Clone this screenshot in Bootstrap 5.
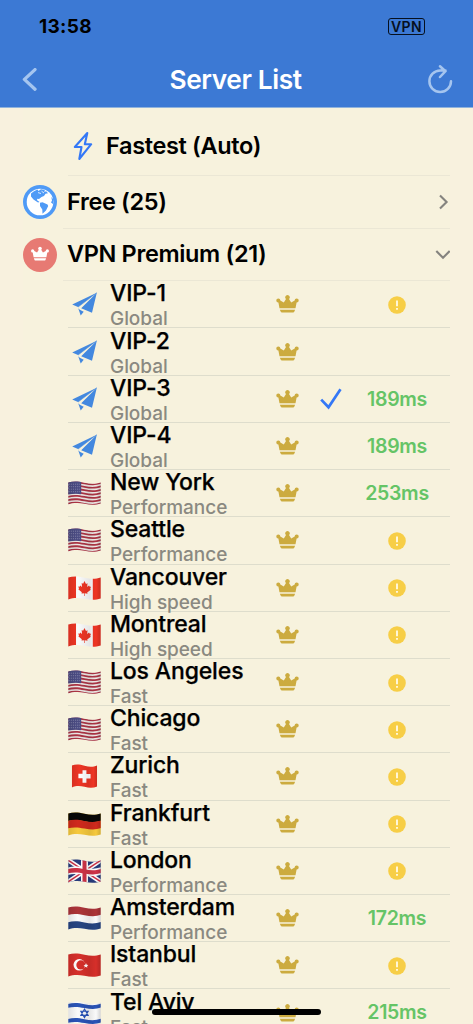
<!DOCTYPE html>
<html lang="en">
<head>
<meta charset="utf-8">
<meta name="viewport" content="width=device-width, initial-scale=1">
<title>Server List</title>
<link href="https://cdn.jsdelivr.net/npm/bootstrap@5.3.0/dist/css/bootstrap.min.css" rel="stylesheet">
<style>
body{background:#f8f1de;font-family:Inter,"Liberation Sans",sans-serif;color:#000;height:1024px;overflow:hidden;font-weight:500}
svg{display:block;flex:none}
.top-area{background:#3c79d4;height:108px;border-bottom:1px solid #90b3dc}
.status-row{height:52px;padding:0 48px 0 39px}
.clock{font-size:19px;font-weight:700;letter-spacing:.3px;line-height:52px;padding-top:1px}
.vpn-tag{border:1.4px solid #06101f;border-radius:3px;width:37px;height:17px;font-size:14px;line-height:15.5px;font-weight:600;letter-spacing:.4px;text-align:center;color:#06101f}
.title-row{height:55px;padding:0 20px 0 22px}
.page-title{font-size:26.3px;font-weight:600;letter-spacing:-.4px;color:#fff;line-height:54px;padding-left:6px;padding-top:1px}
.panel{margin:0 23px;background:#f7f2dd}
.head-row{font-size:23.5px;line-height:30px;font-weight:600;letter-spacing:-.35px;border-bottom:1px solid #ebe7d5}
.fastest-row{height:68px;margin-left:45px;padding-top:8px}
.group-row{height:52.6px;padding:0 0 0 4px}
.group-icon{margin-top:8px}
.server{display:grid;grid-template-columns:42px 1fr 44px 37px 93px;height:47.22px;border-bottom:1px solid #deddcc;margin-left:45px;align-items:center}
.s-name{font-size:23px;line-height:26px;letter-spacing:-.15px;white-space:nowrap;-webkit-text-stroke:.25px #000}
.s-kind{font-size:19px;line-height:26px;color:#8a8981;letter-spacing:-.06px;white-space:nowrap}
.s-text{height:47px;margin-top:-1px}
.s-crown{margin-top:2px}
.ping{color:#65c466;font-size:19.5px;font-weight:600;letter-spacing:-.3px;text-align:center;padding:1px 13px 0 0}
.home-bar{position:absolute;left:152px;top:1009px;width:169px;height:5.5px;border-radius:3px;background:#000}
</style>
</head>
<body>
<header class="top-area">
  <div class="status-row d-flex justify-content-between align-items-center">
    <span class="clock">13:58</span><span class="vpn-tag">VPN</span>
  </div>
  <div class="title-row d-flex justify-content-between align-items-center">
    <svg width="16" height="24" viewBox="0 0 16 24" fill="none" stroke="#a5c5ef" stroke-width="3.3" stroke-linecap="round" stroke-linejoin="round"><path d="M13 1.6 2.4 11.4 13 21.2"/></svg>
    <span class="page-title">Server List</span>
    <svg width="26" height="30" viewBox="0 1 26 30" fill="none" stroke="#a5c5ef" stroke-width="2.5" stroke-linecap="round" stroke-linejoin="round"><path d="M24 17.3A10.8 10.8 0 1 1 13.2 6.5H18.5M13 2.3 18.5 7.2 13 13"/></svg>
  </div>
</header>
<main class="panel">
  <div class="head-row fastest-row d-flex align-items-center">
    <svg width="38" height="30" viewBox="0 0 38 30" fill="none" stroke="#3478f6" stroke-width="2.1" stroke-linejoin="round"><path d="M19.3 2 6.8 16H13.5L11.3 28 23.2 13.2H16.8Z"/></svg>
    <span>Fastest (Auto)</span>
  </div>
  <div class="d-flex">
    <svg class="group-icon" width="40" height="36" viewBox="0 0 40 36"><circle cx="17" cy="18" r="17" fill="#4f9af6"/><circle cx="17" cy="18" r="13.3" fill="#fff"/><path d="M8 9.5 11 7.2 14.5 5.6 15.5 7 18 5.2 22 6 21 7.5 23.5 7.5 25 9.2 22.5 9.8 21 12 18.5 13 16 15 14.5 14.7 13.8 16 16.5 18 15 18.5 10.5 15.5 8 12.5ZM17 18.8 19.5 18.3 24.5 20.5 25.2 22 23 26.5 19.5 29.8 19.3 25.5 17 22Z" fill="#4f9af6"/><path d="M28.3 13 30 15V20L28 18.5 29 16.5Z" fill="#4f9af6"/><path d="M15 8.6 18 9.5M18.5 7.2 21 9" stroke="#fff" stroke-width=".8"/></svg>
    <div class="head-row group-row d-flex flex-grow-1 align-items-center justify-content-between">
      <span>Free (25)</span><svg width="14" height="16" viewBox="0 0 14 16" fill="none" stroke="#85847f" stroke-width="2.1"><path d="M4 1.5 10.6 8 4 14.5"/></svg>
    </div>
  </div>
  <div class="d-flex">
    <svg class="group-icon" width="40" height="36" viewBox="0 0 40 36"><circle cx="17" cy="18" r="17" fill="#e77a73"/><g transform="translate(7.8 9.6) scale(.8)" fill="#fff"><use href="#crown"/></g></svg>
    <div class="head-row group-row d-flex flex-grow-1 align-items-center justify-content-between">
      <span>VPN Premium (21)</span><svg width="15" height="16" viewBox="0 0 15 16" fill="none" stroke="#85847f" stroke-width="2.1"><path d="M1.3 5 8 11.8 14.7 5"/></svg>
    </div>
  </div>
  <div id="servers"></div>
</main>
<div class="home-bar"></div>
<svg width="0" height="0" style="position:absolute">
  <defs>
    <g id="crown"><path d="M3.5 13.2 2.4 7.4A2 2 0 1 1 4.3 5.5L7.8 7.5 10 4A2.2 2.2 0 1 1 13 4L15.2 7.5 18.7 5.5A2 2 0 1 1 20.6 7.4L19.5 13.2ZM3.9 14.7H19.1L18.5 16.3Q18 17.5 17 17.5H6Q5 17.5 4.5 16.3Z"/></g>
    <clipPath id="wave"><path d="M.3 1.4C5 .1 10 .1 16.5 1.7S28 3 32.7 1.4V22.4C28 24 23 24 16.5 22.8S5 21.9 .3 23.4Z"/></clipPath>
    <linearGradient id="shade"><stop offset="0" stop-opacity=".1"/><stop offset=".3" stop-opacity="0"/><stop offset=".65" stop-opacity=".08"/><stop offset=".85" stop-opacity="0"/><stop offset="1" stop-opacity=".16"/></linearGradient>
  </defs>
</svg>
<script src="https://cdn.jsdelivr.net/npm/bootstrap@5.3.0/dist/js/bootstrap.bundle.min.js"></script>
<script>
// A horizontal band that follows the ripple of the flag
const band = (y, h, c) => `<path d="M0 ${y}C5 ${y-1.4} 10 ${y-1.3} 16.5 ${y+.2}S28 ${y+1.4} 33 ${y-.2}v${h}C28 ${y+h+1.6} 23 ${y+h+1.5} 16.5 ${y+h+.2}S5 ${y+h-1.4} 0 ${y+h}Z" fill="${c}"/>`;
const field = c => `<path d="M0 0H33V24H0Z" fill="${c}"/>`;
const flags = {
  us: field('#eee9e6') + [0,1,2,3,4,5,6].map(i => band(1.3 + i*3.4, 1.75, '#ad3545')).join('') +
      '<path d="M0 0H13.2V13.2Q7 12 0 13.6Z" fill="#4b4c83"/>' +
      [3.2,5.7,8.2,10.7].map(y => `<path d="M1.3 ${y}H12.5" stroke="#9797b8" stroke-width=".8" stroke-dasharray=".9 1"/>`).join(''),
  ca: field('#fafafa') + '<path d="M0 0H8V24H0ZM24.8 0H33V24H24.8Z" fill="#ee3524"/><path d="M16.5 5 18 8 19.5 7.2 19.2 11 21 9.5 21.8 10.8 23 10.7 22.2 13 22.8 13.7 19.2 16.5 19.5 17.7 16.8 17.3V20H16.2V17.3L13.5 17.6 13.8 16.3 10.3 13.3 11 12.6 10.2 10.4 11.6 10.7 12.2 9.4 14 11 13.7 7 15.1 7.8Z" fill="#ee3524"/>',
  ch: field('#ee3524') + '<path d="M14 6.3H19V10H24.3V14.5H19V18.7H14V14.2H8.7V9.8H14Z" fill="#fff"/>',
  de: field('#f6c93d') + band(-2, 11, '#080808') + band(8.7, 7.6, '#d02a1d'),
  gb: field('#293c7d') + '<path d="M0 1 33 23M0 23 33 1" stroke="#fff" stroke-width="4.6"/><path d="M0 1 33 23M0 23 33 1" stroke="#cf3347" stroke-width="1.5"/><path d="M16.5 0V24" stroke="#fff" stroke-width="7"/>' + band(8.5, 7.4, '#fff') + band(10.1, 4.2, '#cf3347') + '<path d="M16.5 0V24" stroke="#cf3347" stroke-width="4"/>',
  nl: field('#fafafa') + band(-1, 10, '#ac3439') + band(16.3, 9, '#274582'),
  tr: field('#d62f2a') + '<circle cx="11.3" cy="11.8" r="5.8" fill="#fff"/><circle cx="12.9" cy="11.9" r="4.6" fill="#d62f2a"/><path d="M15.5 12.2 17.3 11.7 18 10 18.7 11.7 20.3 12.1 19.1 13.2 19.3 14.8 17.8 13.8 16.3 14.5 16.8 12.9Z" fill="#fff"/>',
  il: field('#fafafa') + band(3, 3.8, '#2a54b8') + band(18, 3.8, '#2a54b8') + '<path d="M16.5 8 20.2 14.4H12.8ZM16.5 16.6 12.8 10.2H20.2Z" fill="none" stroke="#2a54b8" stroke-width="1.1"/>'
};
const icon = k => k === 'vip'
  ? '<svg width="33" height="24" viewBox="0 0 33 24" fill="#4388df"><path d="M28.8.7 4.2 12.4 10 15.1ZM28.8.7 24 20.8 13.2 16.3ZM10.2 16.3 12.7 23.4 15.7 19.8 11.8 17.7Z"/><path d="M28.8.7 10 15.1" stroke="#4388df" stroke-width=".6"/></svg>'
  : `<svg width="33" height="24" viewBox="0 0 33 24"><g ${k === 'ch' ? 'transform="translate(3.6 0) scale(.78 1)"' : ''}><g clip-path="url(#wave)">${flags[k]}<path d="M0 0H33V24H0Z" fill="url(#shade)"/></g></g></svg>`;
const warn = '<svg class="mx-auto" width="18" height="18" viewBox="0 0 18 18"><circle cx="9" cy="9" r="8.8" fill="#f7ce46"/><path d="M9 4.6V10.2M9 12V13.8" stroke="#fff8df" stroke-width="1.9"/></svg>';
const check = '<svg width="22" height="22" viewBox="0 0 22 22" fill="none" stroke="#3478f6" stroke-width="2.7"><path d="M1.2 11.6 8.5 19.3 20.5 1.2"/></svg>';
const rows = [
  ['vip','VIP-1','Global','!'],['vip','VIP-2','Global',''],['vip','VIP-3','Global','189ms',1],['vip','VIP-4','Global','189ms'],
  ['us','New York','Performance','253ms'],['us','Seattle','Performance','!'],['ca','Vancouver','High speed','!'],['ca','Montreal','High speed','!'],
  ['us','Los Angeles','Fast','!'],['us','Chicago','Fast','!'],['ch','Zurich','Fast','!'],['de','Frankfurt','Fast','!'],
  ['gb','London','Performance','!'],['nl','Amsterdam','Performance','172ms'],['tr','Istanbul','Fast','!'],['il','Tel Aviv','Fast','215ms']
];
document.getElementById('servers').innerHTML = rows.map(([k, name, kind, ping, on]) => `
  <div class="server">
    ${icon(k)}
    <div class="s-text"><div class="s-name">${name}</div><div class="s-kind">${kind}</div></div>
    <svg class="s-crown" width="23" height="20" viewBox="0 0 23 20" fill="#ccab3f"><use href="#crown"/></svg>
    <div>${on ? check : ''}</div>
    <div class="ping">${ping === '!' ? warn : ping}</div>
  </div>`).join('');
</script>
</body>
</html>
